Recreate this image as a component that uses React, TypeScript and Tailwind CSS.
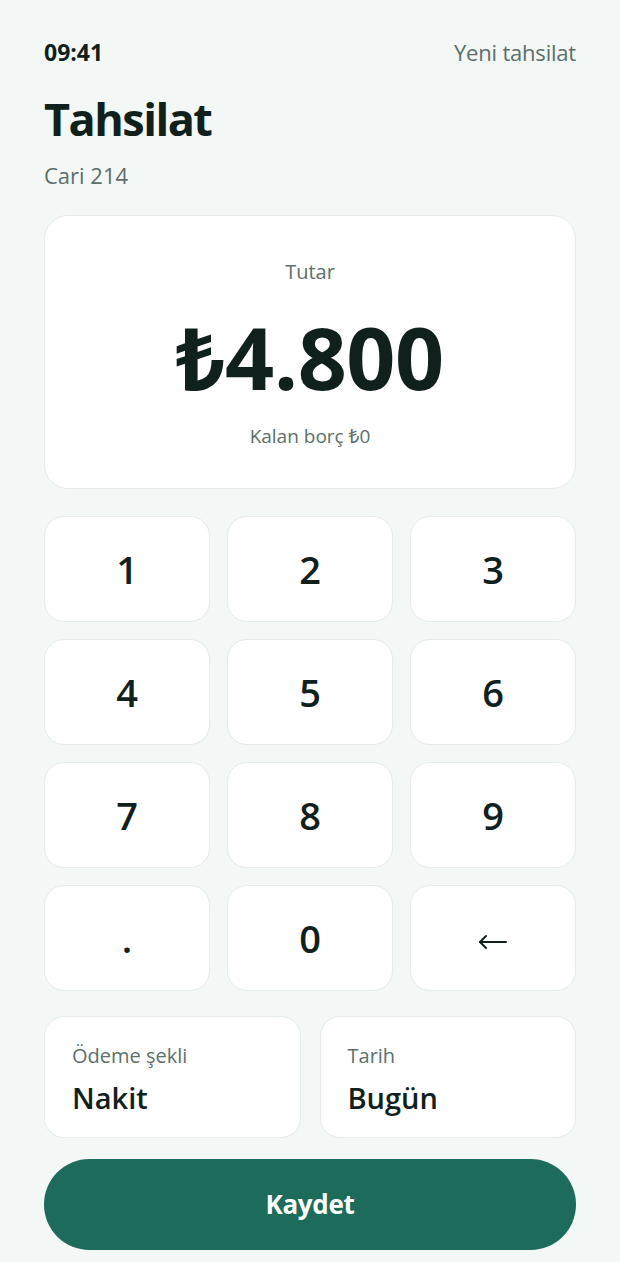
import React from "react";

const keys = ["1", "2", "3", "4", "5", "6", "7", "8", "9", ".", "0", "←"];

function BackArrow() {
  return (
    <svg className="mt-[8px]" width="30" height="16" viewBox="0 0 30 16" fill="none" stroke="#10211d" strokeWidth="2" strokeLinecap="round" strokeLinejoin="round">
      <path d="M2 8 H28" />
      <path d="M8 2 L2 8 L8 14" />
    </svg>
  );
}

export default function App() {
  return (
    <div
      className="min-h-[1262px] w-full bg-[#f3f7f6] px-[44px] text-[#10211d]"
      style={{ fontFamily: '"Open Sans", "Noto Sans", sans-serif' }}
    >
      <div className="flex h-[68px] items-center justify-between pt-[36px]">
        <span className="text-[23px] font-bold leading-none">09:41</span>
        <span className="text-[22px] leading-none text-[#5c6f6a] tracking-[-0.2px]">Yeni tahsilat</span>
      </div>
      <h1 className="mt-[25px] text-[45px] font-bold leading-[52px] tracking-[-1.5px]">Tahsilat</h1>
      <div className="mt-[15px] text-[22px] leading-[30px] text-[#5c6f6a]">Cari 214</div>

      <div className="mt-[25px] flex h-[274px] flex-col items-center rounded-[24px] border border-[#e4ebe9] bg-white">
        <div className="mt-[43px] text-[20px] leading-[26px] text-[#5c6f6a]">Tutar</div>
        <div className="mt-[22px] text-[86px] font-bold leading-[100px] tracking-[-0.5px]">₺4.800</div>
        <div className="mt-[16px] text-[19px] leading-[26px] text-[#5c6f6a]">Kalan borç ₺0</div>
      </div>

      <div className="mt-[27px] grid grid-cols-3 gap-[17px]">
        {keys.map((k) => (
          <button
            key={k}
            className="flex h-[106px] items-center justify-center rounded-[20px] border border-[#e4ebe9] bg-white text-[38px] font-semibold leading-none text-[#10211d]"
          >
            {k === "←" ? <BackArrow /> : k}
          </button>
        ))}
      </div>

      <div className="mt-[25px] grid grid-cols-2 gap-[19px]">
        <div className="h-[122px] rounded-[20px] border border-[#e4ebe9] bg-white px-[27px] pt-[26px]">
          <div className="text-[20px] leading-[26px] text-[#5c6f6a]">Ödeme şekli</div>
          <div className="mt-[12px] text-[29px] font-semibold leading-[34px]">Nakit</div>
        </div>
        <div className="h-[122px] rounded-[20px] border border-[#e4ebe9] bg-white px-[27px] pt-[26px]">
          <div className="text-[20px] leading-[26px] text-[#5c6f6a]">Tarih</div>
          <div className="mt-[12px] text-[29px] font-semibold leading-[34px]">Bugün</div>
        </div>
      </div>

      <button className="mt-[21px] flex h-[91px] w-full items-center justify-center rounded-full bg-[#1c6b5b] text-[26px] font-bold text-white tracking-[-0.3px]">
        Kaydet
      </button>
    </div>
  );
}
